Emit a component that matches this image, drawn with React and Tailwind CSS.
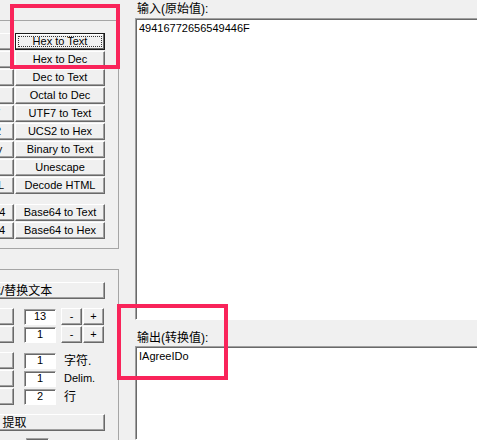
import React from "react";

const raised =
  "border border-t-white border-l-white border-r-[#696969] border-b-[#696969] shadow-[inset_-1px_-1px_0_#a0a0a0]";
const sunken =
  "border border-t-[#a0a0a0] border-l-[#a0a0a0] border-r-white border-b-white shadow-[inset_1px_1px_0_#696969]";

const Btn = ({ children, className = "", focus = false }) => (
  <div
    className={`flex items-center justify-center h-[17px] bg-[#f0f0f0] text-black whitespace-nowrap overflow-hidden ${
      focus ? "border border-[#1a1a1a] shadow-[inset_-1px_-1px_0_#696969,inset_1px_1px_0_#ffffff]" : raised
    } ${className}`}
  >
    {focus ? (
      <span className="flex items-center justify-center w-[84px] h-[11px] border border-dotted border-[#333] leading-none">
        {children}
      </span>
    ) : (
      <span className="leading-none">{children}</span>
    )}
  </div>
);

const Field = ({ value, className = "" }) => (
  <div
    className={`flex items-center justify-center h-[16px] bg-white text-black leading-none ${sunken} ${className}`}
  >
    {value}
  </div>
);

const convRows = [
  ["Text to Hex", "Hex to Text", true],
  ["Dec to Hex", "Hex to Dec"],
  ["Text to Dec", "Dec to Text"],
  ["Dec to Octal", "Octal to Dec"],
  ["Text to UTF7", "UTF7 to Text"],
  ["Hex to UCS2", "UCS2 to Hex"],
  ["Text to Binary", "Binary to Text"],
  ["Escape", "Unescape"],
  ["Encode HTML", "Decode HTML"],
];

const base64Rows = [
  ["Text to Base64", "Base64 to Text"],
  ["Hex to Base64", "Base64 to Hex"],
];

const ConvRow = ({ left, right, focus }) => (
  <div className="flex gap-[1px] ml-[5px]">
    <Btn className="w-[90px]">{left}</Btn>
    <Btn className="w-[90px]" focus={focus}>
      {right}
    </Btn>
  </div>
);

export default function App() {
  return (
    <div className="relative w-[477px] h-[440px] overflow-hidden bg-[#f0f0f0] flex text-[11px] font-['Liberation_Sans','Noto_Sans_CJK_SC',sans-serif]">
      {/* left tool panel (scrolled, partly hidden) */}
      <div className="w-[135px] shrink-0">
        <div className="mt-[20px] -ml-[82px] w-[201px] h-[229px] border border-[#a5a5a5] pt-[12px] flex flex-col gap-[1px]">
          {convRows.map(([l, r, f]) => (
            <ConvRow key={r} left={l} right={r} focus={f} />
          ))}
          <div className="h-[8px]" />
          {base64Rows.map(([l, r]) => (
            <ConvRow key={r} left={l} right={r} />
          ))}
        </div>

        <div className="mt-[20px] -ml-[82px] w-[201px] h-[200px] border border-[#a5a5a5] pt-[12px] flex flex-col">
          <Btn className="ml-[5px] w-[181px] text-[12px]">查找/替换文本</Btn>

          <div className="mt-[9px] flex flex-col gap-[1px]">
            {["13", "1"].map((v, i) => (
              <div key={i} className="flex items-center ml-[5px] h-[17px]">
                <Btn className="w-[90px]">Skip</Btn>
                <Field value={v} className="ml-[10px] w-[32px]" />
                <Btn className="ml-[5px] w-[21px]">-</Btn>
                <Btn className="ml-[1px] w-[21px]">+</Btn>
              </div>
            ))}
          </div>

          <div className="mt-[9px] flex flex-col gap-[1px]">
            {[
              ["1", "字符.", "text-[12px]"],
              ["1", "Delim.", ""],
              ["2", "行", "text-[12px]"],
            ].map(([v, label, cls], i) => (
              <div key={i} className="flex items-center ml-[5px] h-[17px]">
                <Btn className="w-[90px]">Split</Btn>
                <Field value={v} className="ml-[10px] w-[32px]" />
                <span className={`ml-[8px] text-black leading-none ${cls}`}>{label}</span>
              </div>
            ))}
          </div>

          <Btn className="mt-[9px] ml-[5px] w-[181px] text-[12px]">提取</Btn>
          <Field value="" className="mt-[7px] ml-[107px] w-[23px]" />
        </div>
      </div>

      {/* right: input / output */}
      <div className="flex-1 flex flex-col min-w-0">
        <div className="h-[18px] pl-[2px] pt-[3px] text-[12px] leading-[13px] text-black">
          输入(原始值):
        </div>
        <div className="h-[302px] -mr-[2px] bg-white border border-t-[#a0a0a0] border-l-[#a0a0a0] border-r-white border-b-white shadow-[inset_1px_1px_0_#696969] pl-[3px] pt-[3px] leading-[13px] text-black">
          49416772656549446F
        </div>
        <div className="h-[26px] flex items-end pl-[2px] pb-[1px] text-[12px] leading-[13px] text-black">
          输出(转换值):
        </div>
        <div className="flex-1 -mr-[2px] bg-white border border-t-[#a0a0a0] border-l-[#a0a0a0] border-r-white border-b-white shadow-[inset_1px_1px_0_#696969] pl-[3px] pt-[3px] leading-[13px] text-black">
          IAgreeIDo
        </div>
      </div>

      {/* annotation boxes */}
      <div className="absolute left-[10px] top-[4px] w-[110px] h-[65px] border-4 border-[#f9245a]" />
      <div className="absolute left-[117px] top-[304px] w-[111px] h-[76px] border-4 border-[#f9245a]" />
    </div>
  );
}
